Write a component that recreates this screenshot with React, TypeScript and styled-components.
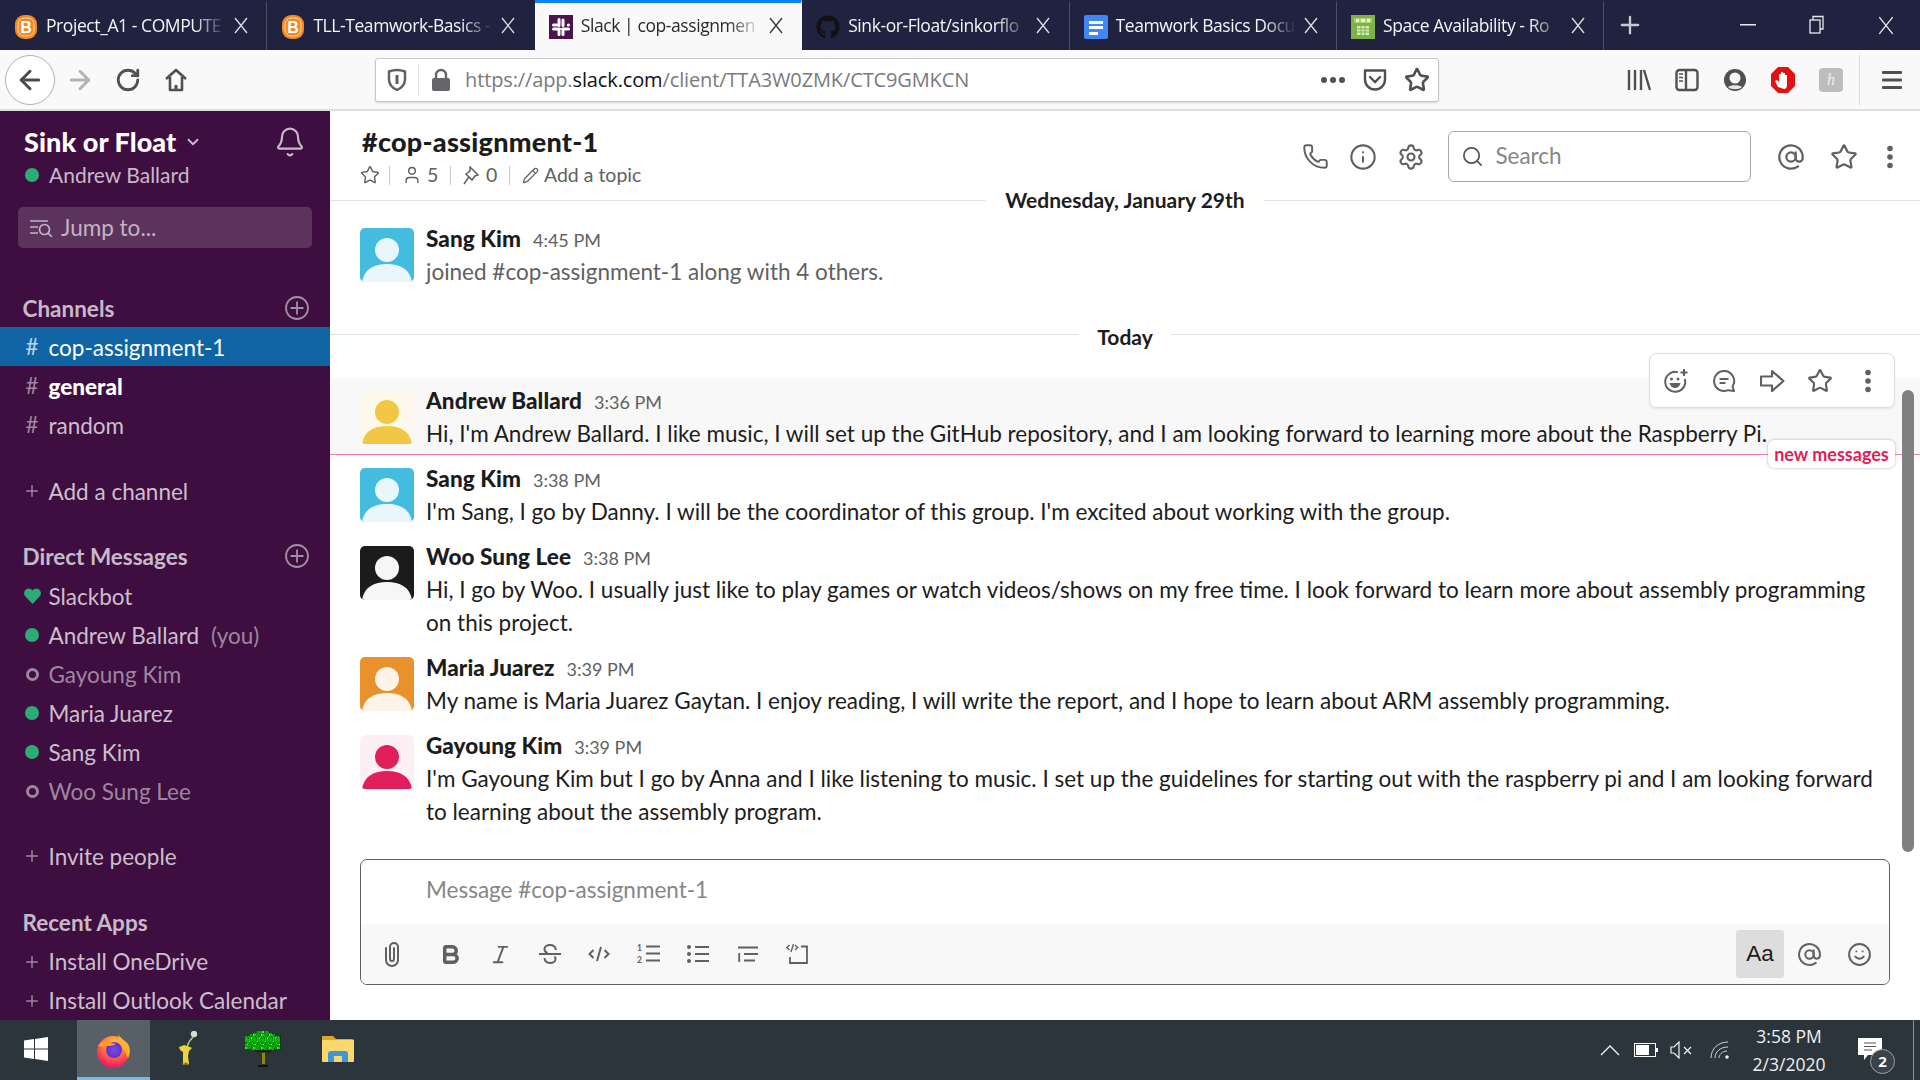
import React from "react";
import styled, { createGlobalStyle } from "styled-components";
import { FaGithub } from "react-icons/fa";
import {
  ArrowLeft, ArrowRight, RotateCw, Phone, Info, Settings, Search, AtSign, Star, Bell, Plus, Smile, Bold, Italic, Pencil, ChevronDown, User,
} from "lucide-react";

const Global = createGlobalStyle`
  html, body { margin: 0; padding: 0; width: 1920px; height: 1080px; overflow: hidden; background: #fff; }
  #root { width: 1920px; height: 1080px; }
  * { box-sizing: border-box; }
`;

const Page = styled.div`
  width: 1920px; height: 1080px; display: flex; flex-direction: column; overflow: hidden;
  font-family: Lato, "Noto Sans", sans-serif; color: #1d1c1d;
`;

/* ---------- Browser tabs ---------- */
const TabBar = styled.div`display: flex; height: 50px; background: #20233f; flex: none; align-items: stretch;`;
const Tab = styled.div<{ $active?: boolean; $sep?: boolean }>`
  width: 267.4px; flex: none; display: flex; align-items: center; padding-left: 14px;
  background: ${(p) => (p.$active ? "#f9f9fa" : "transparent")};
  color: ${(p) => (p.$active ? "#2a2a2e" : "#f4f4f8")};
  border-top: 3px solid ${(p) => (p.$active ? "#0a84ff" : "transparent")};
  border-right: 1px solid ${(p) => (p.$sep ? "#4c4f68" : "transparent")};
`;
const TabTitle = styled.span`
  margin: -4px 0 0 8px; width: 180px; flex: none; white-space: nowrap; overflow: hidden; font: 400 17.5px/24px "Open Sans", sans-serif; letter-spacing: -0.42px;
  -webkit-mask-image: linear-gradient(to right, #000 82%, transparent 100%);
  mask-image: linear-gradient(to right, #000 82%, transparent 100%);
`;
const TabClose = styled.span<{ $active?: boolean }>`
  display: flex; width: 20px; height: 20px; margin: -3px 0 0 5px; align-items: center; justify-content: center; color: ${(p) => (p.$active ? "#3a3a3e" : "#d8d9e2")};
`;
const NewTab = styled.div`width: 52px; display: flex; align-items: center; justify-content: center; color: #c8c9d4;`;
const WinControls = styled.div`margin-left: auto; display: flex; color: #e8e9f0;`;
const WinBtn = styled.div`width: 69px; display: flex; align-items: center; justify-content: center;`;

/* ---------- Browser toolbar ---------- */
const NavBar = styled.div`
  height: 61px; flex: none; display: flex; align-items: center; background: #f9f9fa; border-bottom: 2px solid #dfdfe1; padding: 1px 0 0 5px; color: #5a5a5e;
`;
const BackButton = styled.div`
  width: 50px; height: 50px; margin-right: 1px; border-radius: 50%; background: #fff; border: 1px solid #b1b1b3; display: flex; align-items: center; justify-content: center; color: #4a4a4f;
`;
const NavSlot = styled.div<{ $w?: number; $dim?: boolean }>`
  width: ${(p) => p.$w ?? 48}px; flex: none; display: flex; align-items: center; justify-content: center; color: ${(p) => (p.$dim ? "#b4b4b6" : "#505054")};
`;
const UrlBar = styled.div`
  margin-left: 175px; width: 1064px; height: 44px; flex: none; background: #fff; border: 1px solid #c8c8ca; border-radius: 3px; box-shadow: 0 1px 2px rgba(0,0,0,.14);
  display: flex; align-items: center; color: #5f5f63;
`;
const UrlSep = styled.div`width: 1px; height: 32px; background: #e6e6e8; margin-left: 0;`;
const UrlText = styled.div`
  margin-left: 2px; flex: 1; font: 400 20px/24px "Open Sans", sans-serif; letter-spacing: -0.13px; color: #7a7a7e; white-space: nowrap;
  b { font-weight: 400; color: #111; }
`;
const ToolGroup = styled.div`margin-left: 176px; display: flex; align-items: center; flex: none;`;
const ToolSep = styled.div`width: 1px; height: 50px; background: #dcdcde; margin-left: 4px; margin-right: 9px;`;
const ExtBadge = styled.div`
  width: 24px; height: 24px; border-radius: 4px; background: #bdbdbd; color: #efefef; display: flex; align-items: center; justify-content: center; font: italic 400 16px/1 "Liberation Serif", serif;
`;

/* ---------- App ---------- */
const Body = styled.div`flex: 1; min-height: 0; display: flex;`;
const Sidebar = styled.aside`width: 330px; flex: none; background: #3f0e40; color: #cfc3cf; display: flex; flex-direction: column; overflow: hidden;`;
const TeamBlock = styled.div`position: relative; padding: 14px 0 0 24px; height: 96px;`;
const TeamName = styled.div`display: flex; align-items: center; gap: 8px; font: 900 27px/33px Lato, sans-serif; color: #fff; letter-spacing: 0.08px;`;
const TeamUser = styled.div`display: flex; align-items: center; gap: 10px; font: 400 21px/33px Lato, sans-serif; color: #c7bac8; margin-left: 1px;`;
const BellWrap = styled.div`position: absolute; right: 24px; top: 15px; color: #c7bac8;`;
const Dot = styled.span`width: 14px; height: 14px; border-radius: 50%; background: #2bac76; flex: none; display: block;`;
const JumpBox = styled.div`
  margin: 0 18px; height: 41px; border-radius: 5px; background: #5c335d; flex: none; display: flex; align-items: center; padding-left: 11px; gap: 8px;
  font: 400 22.5px/39px Lato, sans-serif; color: #c2b4c3;
`;
const Group = styled.div<{ $gap?: number }>`margin-top: ${(p) => p.$gap ?? 27.5}px; display: flex; flex-direction: column;`;
const GroupHead = styled.div<{ $h?: number }>`
  height: ${(p) => p.$h ?? 39}px; flex: none; display: flex; align-items: center; justify-content: space-between; padding: 1px 21px 0 22.5px; font: 700 22.5px/35px Lato, sans-serif; color: #c7bac8; letter-spacing: 0;
  svg { margin-top: -1px; }
`;
const Row = styled.div<{ $active?: boolean; $dim?: boolean; $bold?: boolean }>`
  height: 39px; flex: none; display: flex; align-items: center; padding: 2px 0 0 23px; white-space: nowrap;
  font: ${(p) => (p.$bold ? 900 : 400)} 22.5px/35px Lato, sans-serif;
  background: ${(p) => (p.$active ? "#1164a3" : "transparent")};
  color: ${(p) => (p.$active || p.$bold ? "#fff" : p.$dim ? "#9d869f" : "#cbbfcc")};
`;
const RowMark = styled.span<{ $active?: boolean }>`
  width: 18px; margin-right: 7.5px; flex: none; display: flex; align-items: center; justify-content: center; font: 400 22.5px/1 Lato, sans-serif;
  color: ${(p) => (p.$active ? "#b9d4e8" : "#9d869f")};
`;
const Ring = styled.span`width: 13px; height: 13px; border-radius: 50%; border: 3px solid #9d869f; display: block;`;
const You = styled.span`margin-left: 12px; color: #9d869f;`;

const Main = styled.main`flex: 1; min-width: 0; display: flex; flex-direction: column; background: #fff;`;
const Header = styled.header`
  position: relative; height: 90px; flex: none; border-bottom: 1px solid #e2e2e2; display: flex; align-items: center; justify-content: space-between; padding: 4px 0 0 32px;
`;
const DateLabel = styled.div`
  position: absolute; left: 50%; top: 76px; transform: translateX(-50%); background: #fff; padding: 0 20px; font: 700 21px/26px Lato, sans-serif; color: #1d1c1d; white-space: nowrap;
`;
const Titles = styled.div`display: flex; flex-direction: column;`;
const Title = styled.div`font: 900 27px/33px Lato, sans-serif; letter-spacing: 0.25px;`;
const Meta = styled.div`display: flex; align-items: center; height: 30px; font: 400 19.5px/30px Lato, sans-serif; color: #616061; margin-top: 2px;`;
const MetaItem = styled.span`display: flex; align-items: center; gap: 5px;`;
const MetaStar = styled(MetaItem)`margin: 0 -2px 0 -2.5px;`;
const MetaSep = styled.span`width: 1px; height: 19px; background: #c8c8c8; margin: 0 11.8px;`;
const HeaderTools = styled.div`display: flex; align-items: center; color: #616061; margin-top: -2px;`;
const HSlot = styled.div<{ $w?: number }>`width: ${(p) => p.$w ?? 48}px; flex: none; display: flex; align-items: center; justify-content: center;`;
const SearchBox = styled.div`
  width: 303px; height: 51px; margin: 0 12.6px 0 13px; border: 1px solid #a9a9a9; border-radius: 6px; display: flex; align-items: center; padding-left: 12px; gap: 11px; font: 400 22.5px/1 Lato, sans-serif; color: #868686;
`;

const Scroll = styled.div`position: relative; flex: 1; min-height: 0; overflow: hidden; padding-top: 15px;`;
const Msg = styled.div<{ $hover?: boolean }>`
  position: relative; display: flex; padding: 12px 30px 6px 30px; background: ${(p) => (p.$hover ? "#f8f8f8" : "transparent")};
`;
const Avatar = styled.div<{ $bg: string }>`
  width: 54px; height: 54px; flex: none; border-radius: 5px; overflow: hidden; background: ${(p) => p.$bg}; margin-right: 12px;
  svg { display: block; }
`;
const MsgBody = styled.div`flex: 1; min-width: 0;`;
const MsgHead = styled.div`display: flex; align-items: baseline; height: 27px; gap: 12px;`;
const Sender = styled.span`font: 900 22.5px/22px Lato, sans-serif; letter-spacing: 0.08px;`;
const Time = styled.span`font: 400 18px/22px Lato, sans-serif; color: #616061;`;
const MsgText = styled.div<{ $muted?: boolean }>`font: 400 22.5px/33px Lato, sans-serif; color: ${(p) => (p.$muted ? "#616061" : "#1d1c1d")};`;
const Divider = styled.div`
  height: 84px; display: flex; align-items: center; gap: 18px; font: 700 21px/26px Lato, sans-serif; padding-top: 1px;
  &::before, &::after { content: ""; flex: 1; height: 1px; background: #e2e2e2; margin-top: -4px; }
`;
const NewLine = styled.div`position: absolute; left: 0; right: 0; bottom: 1px; height: 1px; background: #f27ea5;`;
const NewPill = styled.div`
  position: absolute; right: 25px; bottom: -12px; height: 28px; width: 127px; background: #fff; border-radius: 6px; box-shadow: 0 0 3px rgba(0,0,0,.3);
  font: 700 18px/28px Lato, sans-serif; color: #e01e5a; text-align: center;
`;
const Actions = styled.div`
  position: absolute; top: 152px; right: 25px; width: 246px; height: 55px; background: #fff; border: 1px solid #dcdcdc; border-radius: 7px; box-shadow: 0 1px 2px rgba(0,0,0,.08);
  display: flex; align-items: center; padding-left: 2px; color: #616061; z-index: 2;
`;
const ActionSlot = styled.div`width: 48px; flex: none; display: flex; justify-content: center; align-items: center;`;
const ScrollThumb = styled.div`position: absolute; top: 189px; right: 6px; width: 12px; height: 462px; background: #808080; border-radius: 6px;`;

const Composer = styled.div`
  flex: none; margin: 0 30px 35px; height: 126px; border: 1px solid #5f5f5f; border-radius: 7px; overflow: hidden; display: flex; flex-direction: column;
`;
const ComposeInput = styled.div`height: 64px; flex: none; padding: 0 0 0 65px; font: 400 22.5px/60px Lato, sans-serif; color: #868686;`;
const ComposeTools = styled.div`flex: 1; background: #f8f8f8; display: flex; align-items: center; padding-left: 5px; color: #616061;`;
const CSlot = styled.div<{ $w?: number }>`width: ${(p) => p.$w ?? 49.5}px; flex: none; display: flex; align-items: center; justify-content: center;`;
const CGap = styled.div`width: 8px; flex: none;`;
const RightTools = styled.div`margin-left: auto; display: flex; align-items: center; padding-right: 5px;`;
const AaBtn = styled.div`
  width: 48px; height: 48px; background: #dddddd; border-radius: 3px; display: flex; align-items: center; justify-content: center; font: 400 22.5px/1 "Liberation Sans", sans-serif; color: #1d1c1d; margin-right: 1px;
`;

/* ---------- Taskbar ---------- */
const Taskbar = styled.footer`height: 60px; flex: none; background: #2c353c; display: flex; align-items: stretch; color: #fff;`;
const TaskSlot = styled.div<{ $w?: number; $on?: boolean; $pr?: number }>`
  width: ${(p) => p.$w ?? 75}px; flex: none; display: flex; align-items: center; justify-content: center;
  background: ${(p) => (p.$on ? "#576067" : "transparent")};
  border-bottom: 3px solid ${(p) => (p.$on ? "#76b9ed" : "transparent")};
  padding-top: ${(p) => (p.$on ? 3 : 0)}px;
  padding-right: ${(p) => p.$pr ?? 0}px;
`;
const Tray = styled.div`margin-left: auto; display: flex; align-items: center; color: #f0f2f3;`;
const TraySlot = styled.div<{ $w?: number }>`width: ${(p) => p.$w ?? 36}px; flex: none; display: flex; align-items: center; justify-content: center;`;
const Clock = styled.div`width: 98px; flex: none; text-align: center; font: 400 17.5px/28px "Open Sans", sans-serif; color: #eef0f1;`;
const Notif = styled.div`position: relative; width: 56px; height: 44px; flex: none; margin-left: 6px;`;
const NotifBadge = styled.div`
  position: absolute; left: 26px; top: 21px; width: 25px; height: 25px; border-radius: 50%; background: #3a4349; border: 1px solid #9aa0a4; font: 700 15px/23px "Open Sans", sans-serif; text-align: center; color: #fff;
`;
const NotifBubble = styled.svg`position: absolute; left: 14px; top: 10px;`;
const EndLine = styled.div`width: 1px; height: 60px; background: #8a9196; margin: 0 6px 0 13px;`;

/* ---------- Drawings ---------- */
const Close = ({ s = 14, w = 1.4 }: { s?: number; w?: number }) => (
  <svg width={s} height={s + 3} viewBox="0 0 14 17" stroke="currentColor" strokeWidth={w} fill="none"><path d="M1 1l12 15M13 1L1 16" /></svg>
);
const BrightIcon = () => (
  <svg width="24" height="24" viewBox="0 0 24 24">
    <rect x="1" width="22" height="24" rx="9" fill="#f08a24" />
    <rect x="4" y="3" width="16" height="18" rx="6" fill="none" stroke="#ffd9ae" strokeWidth="1" />
    <text x="12" y="18" textAnchor="middle" fontFamily="Liberation Sans" fontWeight="700" fontSize="16" fill="#fff">B</text>
  </svg>
);
const SlackIcon = () => (
  <svg width="24" height="24" viewBox="0 0 24 24">
    <rect width="24" height="24" fill="#4a154b" />
    <g stroke="#fff" strokeWidth="3" strokeLinecap="round" fill="none">
      <path d="M10 4.500v6M4.500 10h3" /><path d="M14 5v5.500M19.500 10h-.1" /><path d="M14 19.500V14M19.500 14h-6" /><path d="M10 19.500V16M4.500 14h6" />
    </g>
  </svg>
);
const DocIcon = () => (
  <svg width="24" height="24" viewBox="0 0 24 24">
    <rect width="24" height="24" rx="2" fill="#4285f4" />
    <path d="M5 6h14v3H5zM5 11h14v3H5zM5 17h9v3H5z" fill="#fff" />
  </svg>
);
const SheetIcon = () => (
  <svg width="24" height="24" viewBox="0 0 24 24">
    <rect width="24" height="24" fill="#7cb342" />
    <path d="M3 3h18v5H3z" fill="#a5d070" />
    <path d="M5 4h3v3H5zM10 4h4v3h-4zM16 4h3v3h-3z" fill="#eef6e2" />
    <path d="M6 11h12v9H6z" fill="#d6e9bd" />
    <path d="M6 14h12M6 17h12M10 11v9M14 11v9" stroke="#7cb342" strokeWidth="1" />
  </svg>
);
const ShieldIcon = () => (
  <svg width="20" height="24" viewBox="0 0 20 24" fill="none" stroke="#5f5f63" strokeWidth="2.400"><path d="M2 3.500C5 2.400 7.500 2 10 2s5 .4 8 1.500v8c0 5-3.500 8.500-8 10.500-4.500-2-8-5.500-8-10.500z" /><path d="M10 7v9" strokeWidth="3" /></svg>
);
const LockIcon = () => (
  <svg width="20" height="24" viewBox="0 0 20 24"><path d="M5 11V7a5 5 0 0 1 10 0v4" fill="none" stroke="#66666a" strokeWidth="2.400" /><rect x="1" y="10" width="18" height="13" rx="2" fill="#66666a" /></svg>
);
const DotsH = () => (
  <svg width="26" height="8" viewBox="0 0 26 8" fill="#505054"><circle cx="4" cy="4" r="3" /><circle cx="13" cy="4" r="3" /><circle cx="22" cy="4" r="3" /></svg>
);
const PocketIcon = () => (
  <svg width="24" height="24" viewBox="0 0 24 24" fill="none" stroke="#505054" strokeWidth="2.400"><path d="M2 2.500h20v9a10 10 0 0 1-20 0z" strokeLinejoin="round" /><path d="M7 9l5 5 5-5" strokeLinecap="round" /></svg>
);
const HomeIcon = () => (
  <svg width="24" height="26" viewBox="0 0 24 26" fill="none" stroke="#505054" strokeWidth="2.600"><path d="M2 12L12 3l10 9M6 10v13h12V10" strokeLinejoin="round" /><path d="M12 23v-5" strokeWidth="3" /></svg>
);
const LibraryIcon = () => (
  <svg width="26" height="24" viewBox="0 0 26 24" stroke="#505054" strokeWidth="2.400" fill="none"><path d="M3 2v20M9 2v20M15 2v20M18 2l6 20" /></svg>
);
const SidebarIcon = () => (
  <svg width="24" height="24" viewBox="0 0 24 24" fill="none" stroke="#505054" strokeWidth="2.400"><rect x="1.500" y="2" width="21" height="20" rx="3" /><path d="M11 2v20" /><path d="M4 6h4M4 9.500h4M4 13h4" strokeWidth="1.600" /></svg>
);
const AccountIcon = () => (
  <svg width="24" height="24" viewBox="0 0 24 24"><circle cx="12" cy="12" r="11" fill="#505054" /><circle cx="12" cy="10" r="5.500" fill="#f9f9fa" /><path d="M5 19c3-2.500 11-2.500 14 0-3 3-11 3-14 0z" fill="#e8e8e8" /></svg>
);
const BlockIcon = () => (
  <svg width="26" height="28" viewBox="0 0 26 28"><path d="M8 1h10l7 7v12l-7 7H8l-7-7V8z" fill="#e60f12" /><path d="M8 21l-3-6 2-1 2 2V8h2v5-7h2v7-6h2v6-4h2v10c0 2-1 4-3 4z" fill="#fff" /></svg>
);
const Hamburger = () => (
  <svg width="20" height="18" viewBox="0 0 20 18" fill="#505054"><rect width="20" height="3" rx="1" y="0" /><rect width="20" height="3" rx="1" y="7.500" /><rect width="20" height="3" rx="1" y="15" /></svg>
);
const RestoreIcon = () => (
  <svg width="16" height="20" viewBox="0 0 16 20" fill="none" stroke="currentColor" strokeWidth="1.300"><rect x="1" y="5" width="10" height="13" /><path d="M4 5V1.500h10V14h-3" /></svg>
);
const JumpIcon = () => (
  <svg width="24" height="18" viewBox="0 0 24 18" fill="none" stroke="#c2b4c3" strokeWidth="1.700"><path d="M1 2h18M1 8h8M1 14h8" /><circle cx="15.500" cy="10.500" r="5" /><path d="M19 14l4 4" /></svg>
);
const CirclePlus = () => (
  <svg width="24" height="24" viewBox="0 0 24 24" fill="none" stroke="#a08ea2" strokeWidth="1.800"><circle cx="12" cy="12" r="11" /><path d="M12 5.500v13M5.500 12h13" /></svg>
);
const Heart = () => (
  <svg width="17" height="16" viewBox="0 0 17 16" fill="#2bac76"><path d="M8.500 16L1 8A4.600 4.600 0 0 1 8.500 2.500 4.600 4.600 0 0 1 16 8z" /></svg>
);
const Person = ({ c }: { c: string }) => (
  <svg width="54" height="54" viewBox="0 0 54 54" fill={c}><circle cx="27" cy="22" r="12" /><path d="M2 54c2-13 12-18 25-18s23 5 25 18z" /></svg>
);
const PinIcon = () => (
  <svg width="18" height="19" viewBox="0 0 18 19" fill="none" stroke="#616061" strokeWidth="1.500"><path d="M7 1l8 8-3 1-3 4-6-6 4-3zM5.500 11.500L1 18" /></svg>
);
const ReactIcon = () => (
  <svg width="26" height="26" viewBox="0 0 26 26" fill="none" stroke="#616061" strokeWidth="2"><path d="M21.800 11a10 10 0 1 1-7-6.800" /><circle cx="8.500" cy="11" r="1.500" fill="#616061" stroke="none" /><circle cx="15" cy="11" r="1.500" fill="#616061" stroke="none" /><path d="M6.500 15h11c-.5 3-3 5-5.500 5s-5-2-5.500-5z" fill="#616061" stroke="none" /><path d="M21 1v7M17.500 4.500h7" /></svg>
);
const ThreadIcon = () => (
  <svg width="24" height="24" viewBox="0 0 24 24" fill="none" stroke="#616061" strokeWidth="2"><path d="M12 2a10 10 0 1 0 4 19.200L22 22l-1.500-4.500A10 10 0 0 0 12 2z" strokeLinejoin="round" /><path d="M7.500 10h9M7.500 14h6" /></svg>
);
const ShareIcon = () => (
  <svg width="25" height="24" viewBox="0 0 25 24" fill="none" stroke="#616061" strokeWidth="2.200" strokeLinejoin="round"><path d="M1 7.500h11V2l11.500 10L12 22v-5.500H1z" /></svg>
);
const DotsV = ({ c = "#616061" }: { c?: string }) => (
  <svg width="8" height="24" viewBox="0 0 8 24" fill={c}><circle cx="4" cy="3.500" r="2.800" /><circle cx="4" cy="12" r="2.800" /><circle cx="4" cy="20.500" r="2.800" /></svg>
);
const ClipIcon = () => (
  <svg width="18" height="26" viewBox="0 0 18 26" fill="none" stroke="#616061" strokeWidth="2"><path d="M3 7v12a6 6 0 0 0 12 0V6a4 4 0 0 0-8 0v12a2 2 0 0 0 4 0V7" strokeLinecap="round" /></svg>
);
const StrikeIcon = () => (
  <svg width="24" height="24" viewBox="0 0 24 24" fill="none" stroke="#616061" strokeWidth="2"><path d="M18 8c-.5-3-3-5-6-5s-5.500 1.500-5.500 4c0 2 1.500 3.500 3 4M6.500 16c.3 3 2.500 5 5.500 5s5.500-1.500 5.500-4c0-1-.3-1.800-1-2.500" /><path d="M1 12h22" /></svg>
);
const CodeIcon = () => (
  <svg width="22" height="16" viewBox="0 0 22 16" fill="none" stroke="#616061" strokeWidth="2"><path d="M5.500 4L1.500 8l4 4M16.500 4l4 4-4 4M13 1L9 15" /></svg>
);
const OlIcon = () => (
  <svg width="23" height="22" viewBox="0 0 23 22"><path d="M9 3.500h14M9 10.500h14M9 17.500h14" stroke="#616061" strokeWidth="2" /><text x="0" y="8" fontFamily="Lato" fontWeight="700" fontSize="8.500" fill="#616061">1</text><text x="0" y="20" fontFamily="Lato" fontWeight="700" fontSize="8.500" fill="#616061">2</text></svg>
);
const UlIcon = () => (
  <svg width="22" height="20" viewBox="0 0 22 20" fill="#616061"><circle cx="2" cy="3" r="2" /><circle cx="2" cy="10" r="2" /><circle cx="2" cy="17" r="2" /><path d="M8 3h14M8 10h14M8 17h14" stroke="#616061" strokeWidth="2" /></svg>
);
const QuoteIcon = () => (
  <svg width="20" height="16" viewBox="0 0 20 16" stroke="#616061" strokeWidth="1.800" fill="none"><path d="M0 1.500h20M6 8h14M6 14.500h11M1.200 7v9" /></svg>
);
const CodeBlockIcon = () => (
  <svg width="22" height="21" viewBox="0 0 22 21" fill="none" stroke="#616061" strokeWidth="1.800"><path d="M15 2.500h6V19H4v-6" /><path d="M3.500 1L.8 3.500 3.500 6M9 1l2.700 2.500L9 6M7.500 0L5 8" strokeWidth="1.400" /></svg>
);
const WinLogo = () => (
  <svg width="24" height="24" viewBox="0 0 24 24" fill="#fff"><path d="M0 3.500l10-1.400v9.300H0zM11 2l13-2v11.400H11zM0 12.500h10v9.400L0 20.500zM11 12.500h13V24l-13-1.900z" /></svg>
);
const FirefoxLogo = () => (
  <svg width="36" height="36" viewBox="0 0 36 36">
    <defs>
      <radialGradient id="ffb" cx="55%" cy="25%" r="85%"><stop offset="0" stopColor="#ffd23e" /><stop offset=".45" stopColor="#ff7139" /><stop offset=".85" stopColor="#f5156c" /><stop offset="1" stopColor="#e31587" /></radialGradient>
      <radialGradient id="ffp" cx="50%" cy="50%" r="60%"><stop offset="0" stopColor="#7b4be0" /><stop offset="1" stopColor="#592acb" /></radialGradient>
    </defs>
    <circle cx="17" cy="20" r="16" fill="url(#ffb)" />
    <path d="M22 1c1 5 6 6 10 11 3 5 2 11 0 14-3-5-4-12-12-14 3-3 3-7 2-11z" fill="#ffb02e" />
    <circle cx="18" cy="18" r="8" fill="url(#ffp)" />
    <path d="M2 14c3-5 8-6 11-4 3 1 5 2 7 1-2 3-6 3-9 3-3 1-6 1-9 0z" fill="#ff9a2e" />
  </svg>
);
const PikminIcon = () => (
  <svg width="20" height="36" viewBox="0 0 20 36">
    <circle cx="16" cy="3" r="3.200" fill="#d9dbd4" />
    <path d="M15 6c-3 3-5 6-6 10" stroke="#b9cf8c" strokeWidth="1.300" fill="none" />
    <path d="M1 16l3-1 2-1 3 1 3 1 2 1-3 3-1 5 1 8-2 1-1-3-2 3-1-1V21L2 19z" fill="#ecd23a" />
    <path d="M4 33h6" stroke="#8a7a20" strokeWidth="1.300" />
  </svg>
);
const TreeIcon = () => {
  const cells: React.ReactElement[] = [];
  for (let y = 0; y < 13; y++) {
    const half = y < 3 ? 16 - 3 * (3 - y) : y > 10 ? 16 - 4 * (y - 10) : 18;
    for (let x = -half; x < half; x += 1) {
      const v = (x * 7 + y * 13 + x * y) & 7;
      const edge = y === 12 || x >= half - 1;
      const fill = edge ? "#0a2a0a" : v === 0 ? "#7be04a" : v < 3 ? "#18c414" : v === 7 ? "#0a6a0a" : "#0aa00a";
      cells.push(<rect key={`${x}-${y}`} x={18 + x} y={y * 1.600} width="1" height="1.600" fill={fill} />);
    }
  }
  return (
    <svg width="36" height="36" viewBox="0 0 36 36" shapeRendering="crispEdges">
      <path d="M9 20l7 6v8h5v-8l7-6-3-1-5 4h-3l-5-4z" fill="#3a2a18" />
      <path d="M16.500 22h3v11h-3z" fill="#8a8a10" />
      <path d="M13 33.500h10V36H13z" fill="#111" />
      {cells}
    </svg>
  );
};
const FolderIcon = () => (
  <svg width="32" height="28" viewBox="0 0 32 28">
    <path d="M0 2a1 1 0 0 1 1-1h10l3 3h16a2 2 0 0 1 2 2v2H0z" fill="#e0a526" />
    <rect y="5" width="32" height="22" rx="1" fill="#fbd76c" />
    <path d="M6 27v-8a3 3 0 0 1 3-3h14a3 3 0 0 1 3 3v8h-6v-6h-8v6z" fill="#3d97d8" />
  </svg>
);
const ChevUp = () => (<svg width="20" height="12" viewBox="0 0 20 12" fill="none" stroke="#f0f2f3" strokeWidth="1.300"><path d="M1 11l9-9 9 9" /></svg>);
const Battery = () => (<svg width="24" height="14" viewBox="0 0 24 14"><rect x=".5" y=".5" width="21" height="13" fill="none" stroke="#fff" /><rect x="2" y="2" width="13" height="10" fill="#fff" /><rect x="22" y="5" width="2" height="4" fill="#fff" /></svg>);
const Speaker = () => (<svg width="24" height="18" viewBox="0 0 24 18" fill="none" stroke="#f0f2f3" strokeWidth="1.200"><path d="M1 6h3l5-5v16l-5-5H1zM14 6l7 7M21 6l-7 7" /></svg>);
const Wifi = () => (<svg width="20" height="18" viewBox="0 0 20 18" fill="none" stroke="#cfd3d6" strokeWidth="1"><path d="M1 17C1 8 8 1 18 1" /><path d="M5 17c0-6 5-11 13-11" /><path d="M9 17c0-3 3-7 8-7" /><circle cx="17" cy="16" r="1.800" fill="#f0f2f3" stroke="none" /></svg>);

const tabs = [
  { icon: <BrightIcon />, t: "Project_A1 - COMPUTE" },
  { icon: <BrightIcon />, t: "TLL-Teamwork-Basics -" },
  { icon: <SlackIcon />, t: "Slack | cop-assignmen", on: true },
  { icon: <FaGithub size={24} color="#111" />, t: "Sink-or-Float/sinkorflo" },
  { icon: <DocIcon />, t: "Teamwork Basics Docu" },
  { icon: <SheetIcon />, t: "Space Availability - Ro" },
];

const colours = { andrew: ["#fdf8ec", "#f2c744"], sang: ["#43bce0", "#e9f6fc"], woo: ["#1d1c1d", "#f6f6f6"], maria: ["#e8912d", "#fdf3e6"], gayoung: ["#fdf0f4", "#e01e5a"] };

const messages = [
  { k: "andrew", n: "Andrew Ballard", ts: "3:36 PM", t: "Hi, I'm Andrew Ballard. I like music, I will set up the GitHub repository, and I am looking forward to learning more about the Raspberry Pi.", hover: true },
  { k: "sang", n: "Sang Kim", ts: "3:38 PM", t: "I'm Sang, I go by Danny. I will be the coordinator of this group. I'm excited about working with the group." },
  { k: "woo", n: "Woo Sung Lee", ts: "3:38 PM", t: "Hi, I go by Woo. I usually just like to play games or watch videos/shows on my free time. I look forward to learn more about assembly programming on this project." },
  { k: "maria", n: "Maria Juarez", ts: "3:39 PM", t: "My name is Maria Juarez Gaytan. I enjoy reading, I will write the report, and I hope to learn about ARM assembly programming." },
  { k: "gayoung", n: "Gayoung Kim", ts: "3:39 PM", t: "I'm Gayoung Kim but I go by Anna and I like listening to music. I set up the guidelines for starting out with the raspberry pi and I am looking forward to learning about the assembly program." },
] as const;

export default function App() {
  return (
    <Page>
      <Global />
      <TabBar>
        {tabs.map((x, i) => (
          <Tab key={i} $active={x.on} $sep={!x.on && i !== 1}>
            {x.icon}
            <TabTitle>{x.t}</TabTitle>
            <TabClose $active={x.on}><Close /></TabClose>
          </Tab>
        ))}
        <NewTab><Plus size={28} strokeWidth={2} /></NewTab>
        <WinControls>
          <WinBtn><svg width="16" height="2"><rect width="16" height="1.500" fill="currentColor" /></svg></WinBtn>
          <WinBtn><RestoreIcon /></WinBtn>
          <WinBtn><Close s={16} w={1.200} /></WinBtn>
        </WinControls>
      </TabBar>

      <NavBar>
        <BackButton><ArrowLeft size={30} strokeWidth={2.400} /></BackButton>
        <NavSlot $dim><ArrowRight size={30} strokeWidth={2.400} /></NavSlot>
        <NavSlot><RotateCw size={26} strokeWidth={2.600} /></NavSlot>
        <NavSlot><HomeIcon /></NavSlot>
        <UrlBar>
          <NavSlot $w={42}><ShieldIcon /></NavSlot>
          <UrlSep />
          <NavSlot $w={44}><LockIcon /></NavSlot>
          <UrlText>https://app.<b>slack.com</b>/client/TTA3W0ZMK/CTC9GMKCN</UrlText>
          <NavSlot $w={42}><DotsH /></NavSlot>
          <NavSlot $w={42}><PocketIcon /></NavSlot>
          <NavSlot $w={42}><Star size={26} strokeWidth={2.400} /></NavSlot>
        </UrlBar>
        <ToolGroup>
          <NavSlot><LibraryIcon /></NavSlot>
          <NavSlot><SidebarIcon /></NavSlot>
          <NavSlot><AccountIcon /></NavSlot>
          <NavSlot><BlockIcon /></NavSlot>
          <NavSlot><ExtBadge>h</ExtBadge></NavSlot>
          <ToolSep />
          <NavSlot $w={46}><Hamburger /></NavSlot>
        </ToolGroup>
      </NavBar>

      <Body>
        <Sidebar>
          <TeamBlock>
            <TeamName>Sink or Float <ChevronDown size={18} strokeWidth={2.500} color="#c7bac8" /></TeamName>
            <TeamUser><Dot />Andrew Ballard</TeamUser>
            <BellWrap><Bell size={32} strokeWidth={1.600} /></BellWrap>
          </TeamBlock>
          <JumpBox><JumpIcon />Jump to...</JumpBox>

          <Group $gap={40}>
            <GroupHead>Channels<CirclePlus /></GroupHead>
            <Row $active><RowMark $active>#</RowMark>cop-assignment-1</Row>
            <Row $bold><RowMark>#</RowMark>general</Row>
            <Row><RowMark>#</RowMark>random</Row>
          </Group>
          <Group $gap={26.5}><Row><RowMark><Plus size={18} strokeWidth={2} /></RowMark>Add a channel</Row></Group>
          <Group $gap={26.3}>
            <GroupHead $h={40}>Direct Messages<CirclePlus /></GroupHead>
            <Row><RowMark><Heart /></RowMark>Slackbot</Row>
            <Row><RowMark><Dot /></RowMark>Andrew Ballard<You>(you)</You></Row>
            <Row $dim><RowMark><Ring /></RowMark>Gayoung Kim</Row>
            <Row><RowMark><Dot /></RowMark>Maria Juarez</Row>
            <Row><RowMark><Dot /></RowMark>Sang Kim</Row>
            <Row $dim><RowMark><Ring /></RowMark>Woo Sung Lee</Row>
          </Group>
          <Group $gap={26}><Row><RowMark><Plus size={18} strokeWidth={2} /></RowMark>Invite people</Row></Group>
          <Group>
            <GroupHead>Recent Apps</GroupHead>
            <Row><RowMark><Plus size={18} strokeWidth={2} /></RowMark>Install OneDrive</Row>
            <Row><RowMark><Plus size={18} strokeWidth={2} /></RowMark>Install Outlook Calendar</Row>
          </Group>
        </Sidebar>

        <Main>
          <Header>
            <Titles>
              <Title>#cop-assignment-1</Title>
              <Meta>
                <MetaStar><Star size={20} strokeWidth={1.700} /></MetaStar>
                <MetaSep />
                <MetaItem><User size={20} strokeWidth={1.700} />5</MetaItem>
                <MetaSep />
                <MetaItem><PinIcon />0</MetaItem>
                <MetaSep />
                <MetaItem><Pencil size={17} strokeWidth={1.700} />Add a topic</MetaItem>
              </Meta>
            </Titles>
            <HeaderTools>
              <HSlot><Phone size={27} strokeWidth={1.700} /></HSlot>
              <HSlot><Info size={28} strokeWidth={1.800} /></HSlot>
              <HSlot><Settings size={28} strokeWidth={1.800} /></HSlot>
              <SearchBox><Search size={23} strokeWidth={1.800} color="#555" />Search</SearchBox>
              <HSlot $w={53}><AtSign size={28} strokeWidth={1.900} /></HSlot>
              <HSlot $w={53}><Star size={28} strokeWidth={1.900} /></HSlot>
              <HSlot $w={39}><DotsV /></HSlot>
              <HSlot $w={11} />
            </HeaderTools>
            <DateLabel>Wednesday, January 29th</DateLabel>
          </Header>

          <Scroll>
            <Msg>
              <Avatar $bg={colours.sang[0]}><Person c={colours.sang[1]} /></Avatar>
              <MsgBody>
                <MsgHead><Sender>Sang Kim</Sender><Time>4:45 PM</Time></MsgHead>
                <MsgText $muted>joined #cop-assignment-1 along with 4 others.</MsgText>
              </MsgBody>
            </Msg>
            <Divider>Today</Divider>
            {messages.map((m) => {
              const hover = "hover" in m && m.hover;
              return (
                <Msg key={m.n} $hover={hover}>
                  <Avatar $bg={colours[m.k][0]}><Person c={colours[m.k][1]} /></Avatar>
                  <MsgBody>
                    <MsgHead><Sender>{m.n}</Sender><Time>{m.ts}</Time></MsgHead>
                    <MsgText>{m.t}</MsgText>
                  </MsgBody>
                  {hover && <NewLine />}
                  {hover && <NewPill>new messages</NewPill>}
                </Msg>
              );
            })}
            <Actions>
              <ActionSlot><ReactIcon /></ActionSlot>
              <ActionSlot><ThreadIcon /></ActionSlot>
              <ActionSlot><ShareIcon /></ActionSlot>
              <ActionSlot><Star size={26} strokeWidth={2} /></ActionSlot>
              <ActionSlot><DotsV /></ActionSlot>
            </Actions>
            <ScrollThumb />
          </Scroll>

          <Composer>
            <ComposeInput>Message #cop-assignment-1</ComposeInput>
            <ComposeTools>
              <CSlot $w={52}><ClipIcon /></CSlot>
              <CGap />
              <CSlot><Bold size={23} strokeWidth={3.600} /></CSlot>
              <CSlot><Italic size={23} strokeWidth={2} /></CSlot>
              <CSlot><StrikeIcon /></CSlot>
              <CSlot><CodeIcon /></CSlot>
              <CSlot><OlIcon /></CSlot>
              <CSlot><UlIcon /></CSlot>
              <CSlot><QuoteIcon /></CSlot>
              <CSlot><CodeBlockIcon /></CSlot>
              <RightTools>
                <AaBtn>Aa</AaBtn>
                <CSlot><AtSign size={25} strokeWidth={1.900} /></CSlot>
                <CSlot><Smile size={25} strokeWidth={1.900} /></CSlot>
              </RightTools>
            </ComposeTools>
          </Composer>
        </Main>
      </Body>

      <Taskbar>
        <TaskSlot $w={77} $pr={5}><WinLogo /></TaskSlot>
        <TaskSlot $w={73} $on><FirefoxLogo /></TaskSlot>
        <TaskSlot><PikminIcon /></TaskSlot>
        <TaskSlot><TreeIcon /></TaskSlot>
        <TaskSlot><FolderIcon /></TaskSlot>
        <Tray>
          <TraySlot><ChevUp /></TraySlot>
          <TraySlot><Battery /></TraySlot>
          <TraySlot><Speaker /></TraySlot>
          <TraySlot $w={40}><Wifi /></TraySlot>
          <Clock>3:58 PM<br />2/3/2020</Clock>
          <Notif>
            <NotifBubble width="24" height="26" viewBox="0 0 24 26"><path d="M0 0h24v17H10l-4 5v-5H0z" fill="#fff" /><path d="M6 5h12M6 8.500h12M6 12h8" stroke="#555" /></NotifBubble>
            <NotifBadge>2</NotifBadge>
          </Notif>
          <EndLine />
        </Tray>
      </Taskbar>
    </Page>
  );
}
